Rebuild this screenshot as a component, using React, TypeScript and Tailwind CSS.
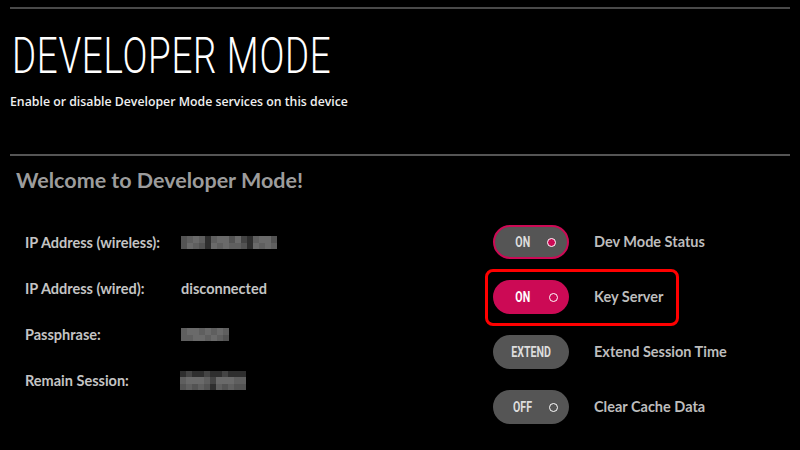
import { FC } from 'react';

const A = 'bg-[#2e2e2e]';
const B = 'bg-[#444444]';
const C = 'bg-[#535353]';
const D = 'bg-[#5f5f5f]';
const E = 'bg-[#6a6a6a]';

type PixelProps = {
  rows: string[][];
  cellW?: string;
  cellH?: string;
};

const Pixelated: FC<PixelProps> = ({ rows, cellW = 'w-[6px]', cellH = 'h-[6px]' }) => (
  <div className="flex flex-col">
    {rows.map((row, i) => (
      <div key={i} className="flex">
        {row.map((c, j) => (
          <div key={j} className={`${cellW} ${cellH} ${c}`} />
        ))}
      </div>
    ))}
  </div>
);

const wireless = [
  [C, D, E, D, A, D, E, E, C, E, B, A, D, E, E, C],
  [C, E, D, C, A, E, D, E, D, D, C, A, E, D, E, D],
];
const passphrase = [
  [D, E, E, D, E, D, E, D],
  [D, D, E, E, D, E, D, C],
];
const remain = [
  [A, B, A, A, B, A, A, B, A, A, A],
  [D, E, E, E, D, B, E, E, E, D, D],
  [C, D, C, D, C, A, D, C, D, C, C],
];

const labelFont = "font-['Lato','Open_Sans',sans-serif] font-bold";

type InfoRowProps = { label: string; children: React.ReactNode };

const InfoRow: FC<InfoRowProps> = ({ label, children }) => (
  <div className="flex items-center h-[46px]">
    <div className={`w-[156px] text-[14.5px] text-[#c4c4c4] ${labelFont}`}>{label}</div>
    <div className="flex items-center">{children}</div>
  </div>
);

type PillProps = {
  text: string;
  variant: 'outlined' | 'filled' | 'plain';
  dot?: 'filled' | 'hollow';
};

const Pill: FC<PillProps> = ({ text, variant, dot }) => {
  const base =
    variant === 'filled'
      ? 'bg-[#cc0a55]'
      : variant === 'outlined'
        ? 'bg-[#555555] border-2 border-[#cc0a55]'
        : 'bg-[#555555]';
  return (
    <div className={`w-[76px] h-[34px] rounded-full flex items-center ${dot ? 'pl-[3px] pr-[11px]' : 'px-[6px]'} ${base}`}>
      <span className="flex-1 flex justify-center">
        <span
          className={`inline-block scale-x-[0.76] text-[14px] font-bold font-['Roboto',sans-serif] ${variant === 'filled' ? 'text-white' : 'text-[#dddddd]'}`}
        >
          {text}
        </span>
      </span>
      {dot === 'filled' && (
        <span className="w-[9px] h-[9px] rounded-full bg-[#cc0a55] border-[1.5px] border-white" />
      )}
      {dot === 'hollow' && (
        <span className="w-[9px] h-[9px] rounded-full border-[1.5px] border-white" />
      )}
    </div>
  );
};

type ActionRowProps = PillProps & { label: string; highlight?: boolean };

const ActionRow: FC<ActionRowProps> = ({ label, highlight, ...pill }) => (
  <div
    className={
      highlight
        ? 'flex items-center h-[57px] -my-[1px] -ml-[8px] pl-[5px] w-[194px] border-[3px] border-[#ff0000] rounded-[8px]'
        : 'flex items-center h-[55px]'
    }
  >
    <Pill {...pill} />
    <span className={`ml-[25px] text-[14.5px] text-[#bdbdbd] ${labelFont}`}>{label}</span>
  </div>
);

export default function App() {
  return (
    <div className="w-[800px] h-[450px] bg-black overflow-hidden pt-[7px]">
      <div className="mx-[10px] h-[2px] bg-[#4a4a4a]" />
      <div className="pl-[12px] mt-[22px] h-[52px] leading-none">
        <h1 className="inline-block origin-left scale-x-[0.735] text-[50px] leading-none font-light text-white font-['Roboto',sans-serif] tracking-[1px]">
          DEVELOPER MODE
        </h1>
      </div>
      <p className="pl-[10px] mt-[10px] text-[12.3px] text-[#f0f0f0] font-semibold font-['Open_Sans',sans-serif]">
        Enable or disable Developer Mode services on this device
      </p>
      <div className="mx-[10px] mt-[43px] h-[2px] bg-[#555555]" />
      <h2 className={`pl-[16px] mt-[8px] text-[21.5px] text-[#9c9c9c] ${labelFont}`}>
        Welcome to Developer Mode!
      </h2>
      <div className="flex mt-[18px]">
        <div className="pl-[25px] w-[493px] pt-[5px]">
          <InfoRow label="IP Address (wireless):">
            <Pixelated rows={wireless} cellW="w-[6px]" cellH="h-[6.5px]" />
          </InfoRow>
          <InfoRow label="IP Address (wired):">
            <span className={`text-[14.5px] text-[#c4c4c4] ${labelFont}`}>disconnected</span>
          </InfoRow>
          <InfoRow label="Passphrase:">
            <Pixelated rows={passphrase} cellW="w-[6px]" cellH="h-[6.5px]" />
          </InfoRow>
          <InfoRow label="Remain Session:">
            <div className="-ml-[1px]">
              <Pixelated rows={remain} cellW="w-[6px]" cellH="h-[6.5px]" />
            </div>
          </InfoRow>
        </div>
        <div className="flex flex-col">
          <ActionRow text="ON" variant="outlined" dot="filled" label="Dev Mode Status" />
          <ActionRow text="ON" variant="filled" dot="hollow" label="Key Server" highlight />
          <ActionRow text="EXTEND" variant="plain" label="Extend Session Time" />
          <ActionRow text="OFF" variant="plain" dot="hollow" label="Clear Cache Data" />
        </div>
      </div>
    </div>
  );
}
